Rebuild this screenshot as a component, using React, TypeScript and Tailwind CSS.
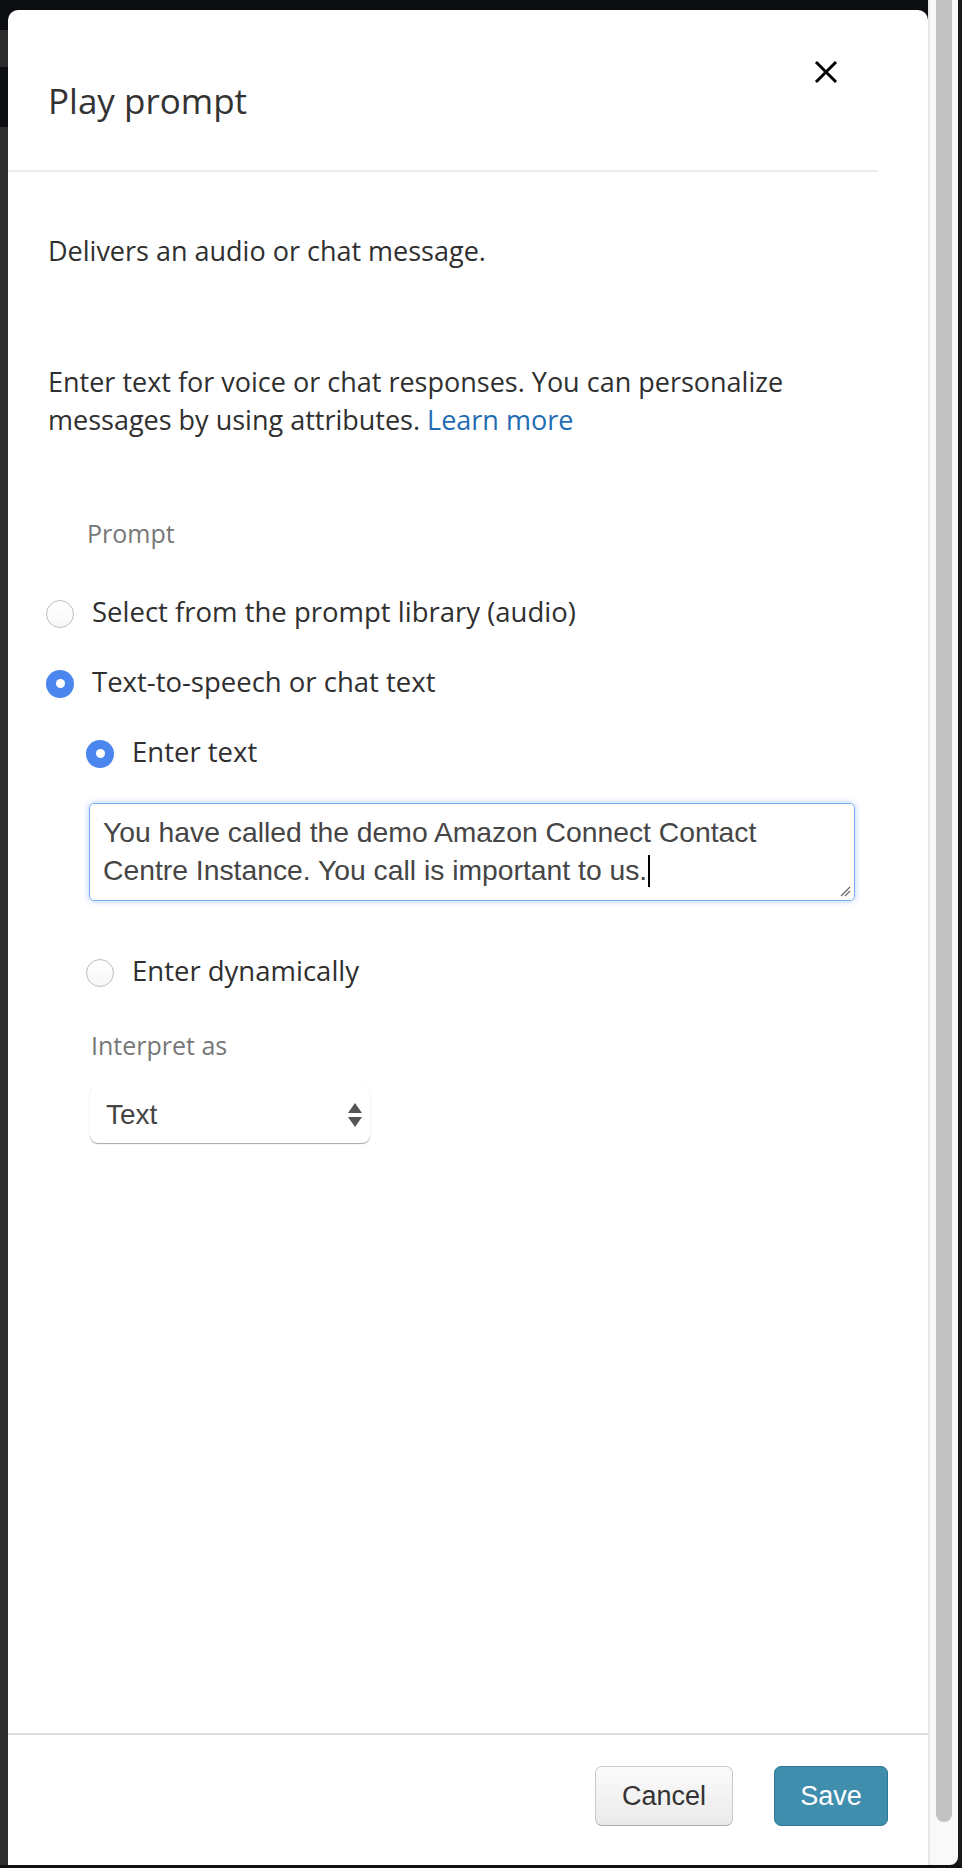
import React from 'react'

const body = "font-['Open_Sans',sans-serif]"
const arial = "font-['Liberation_Sans',Arial,sans-serif]"

interface RadioRowProps {
  checked?: boolean
  label: string
}

const RadioRow: React.FC<RadioRowProps> = ({ checked, label }) => (
  <div className="flex h-[38px] items-center gap-[18px]">
    {checked ? (
      <span className="mt-[3px] flex h-[28px] w-[28px] shrink-0 items-center justify-center rounded-full bg-[#4b85ee]">
        <span className="h-[9px] w-[9px] rounded-full bg-white" />
      </span>
    ) : (
      <span className="mt-[3px] h-[28px] w-[28px] shrink-0 rounded-full border border-[#bdbdbd] bg-gradient-to-b from-white to-[#f7f7f7]" />
    )}
    <span className="text-[27.5px] leading-[38px] text-[#2f2f2f]">{label}</span>
  </div>
)

export default function App() {
  return (
    <div className={`${body} flex h-[1868px] w-[962px] flex-col bg-[#111]`}>
      <div className="flex h-[1865px]">
        {/* backdrop edge on the left */}
        <div className="flex w-[8px] flex-col">
          <div className="h-[30px] bg-[#0c0d10]" />
          <div className="h-[37px] bg-[#2c2c2c]" />
          <div className="h-[60px] bg-[#0c0d10]" />
          <div className="flex-1 bg-[#2d2d2d]" />
        </div>

        <div className="flex w-[920px] flex-col bg-[#0c0d10]">
          <div className="h-[10px]" />
          <div className="flex flex-1 flex-col rounded-t-[10px] bg-white">
            {/* header */}
            <div className="mr-[50px] flex h-[162px] items-start justify-between border-b-2 border-[#ebebeb] pl-[40px] pr-[40px]">
              <h2 className="pt-[70px] text-[35px] leading-[42px] font-normal text-[#333]">Play prompt</h2>
              <button className="mt-[50px]" aria-label="Close">
                <svg width="24" height="24" viewBox="0 0 24 24">
                  <path d="M2 2L22 22M22 2L2 22" stroke="#000" strokeWidth="3" />
                </svg>
              </button>
            </div>

            {/* body */}
            <div className="flex flex-1 flex-col pl-[40px] pr-[40px]">
              <p className="pt-[60px] text-[27px] leading-[38px] text-[#2f2f2f]">Delivers an audio or chat message.</p>
              <div className="mt-[93px] w-[800px] text-[27px] leading-[38px] text-[#2f2f2f]">
                <p>Enter text for voice or chat responses. You can personalize</p>
                <p>
                  messages by using attributes. <a className="text-[#1f6cb3]">Learn more</a>
                </p>
              </div>

              <div className="ml-[39px] mt-[77px] text-[25px] leading-[34px] text-[#777]">Prompt</div>

              <div className="-ml-[2px] mt-[43px] flex flex-col gap-[32px]">
                <RadioRow label="Select from the prompt library (audio)" />
                <RadioRow checked label="Text-to-speech or chat text" />
              </div>

              <div className="ml-[38px] mt-[32px] flex flex-col">
                <RadioRow checked label="Enter text" />

                <div className="relative ml-[3px] mt-[32px] h-[98px] w-[766px] rounded-[5px] border border-[#79aaee] pl-[13px] pr-[40px] pt-[9px] shadow-[0_0_6px_rgba(80,140,230,0.45)]">
                  <div className={`${arial} text-[28.3px] leading-[38px] text-[#454545]`}>
                    You have called the demo Amazon Connect Contact Centre Instance. You call is important to us.
                    <span className="ml-[1px] inline-block h-[32px] w-[1.5px] bg-black align-[-7px]" />
                  </div>
                  <svg className="absolute bottom-[3px] right-[3px]" width="11" height="11" viewBox="0 0 11 11">
                    <path d="M1 10L10 1M5 10L10 5" stroke="#666" strokeWidth="1.2" />
                  </svg>
                </div>

                <div className="mt-[51px]">
                  <RadioRow label="Enter dynamically" />
                </div>

                <div className="ml-[5px] mt-[38px] text-[25px] leading-[34px] text-[#777]">Interpret as</div>

                <div className="ml-[4px] mt-[24px] flex h-[57px] w-[280px] items-center justify-between rounded-[8px] bg-white pl-[16px] pr-[8px] shadow-[0_1px_1px_rgba(0,0,0,0.35),0_0_1px_rgba(0,0,0,0.06)]">
                  <span className={`${arial} text-[28px] text-[#444]`}>Text</span>
                  <svg width="14" height="24" viewBox="0 0 14 24">
                    <path d="M7 0L14 10H0Z M0 14H14L7 24Z" fill="#555" />
                  </svg>
                </div>
              </div>
            </div>

            {/* footer */}
            <div className="flex justify-end gap-[41px] border-t-2 border-[#dedede] pb-[39px] pr-[40px] pt-[31px]">
              <button className={`${arial} h-[60px] w-[138px] rounded-[7px] border border-[#c9c9c9] border-b-[#a9a9a9] bg-gradient-to-b from-[#fbfbfb] to-[#eaeaea] text-[27px] text-[#333]`}>
                Cancel
              </button>
              <button className={`${arial} h-[60px] w-[114px] rounded-[7px] border border-[#2f7594] bg-[#408ead] text-[27px] text-white`}>
                Save
              </button>
            </div>
          </div>
        </div>

        {/* page scrollbar */}
        <div className="w-[30px] rounded-br-[8px] border-l-2 border-[#e8e8e8] bg-[#f9f9f9] pl-[6px]">
          <div className="h-[1822px] w-[16px] rounded-b-full bg-[#c1c1c1]" />
        </div>
        <div className="w-[4px] bg-[#1a1a1a]" />
      </div>
      <div className="h-[3px] bg-[#111]" />
    </div>
  )
}
